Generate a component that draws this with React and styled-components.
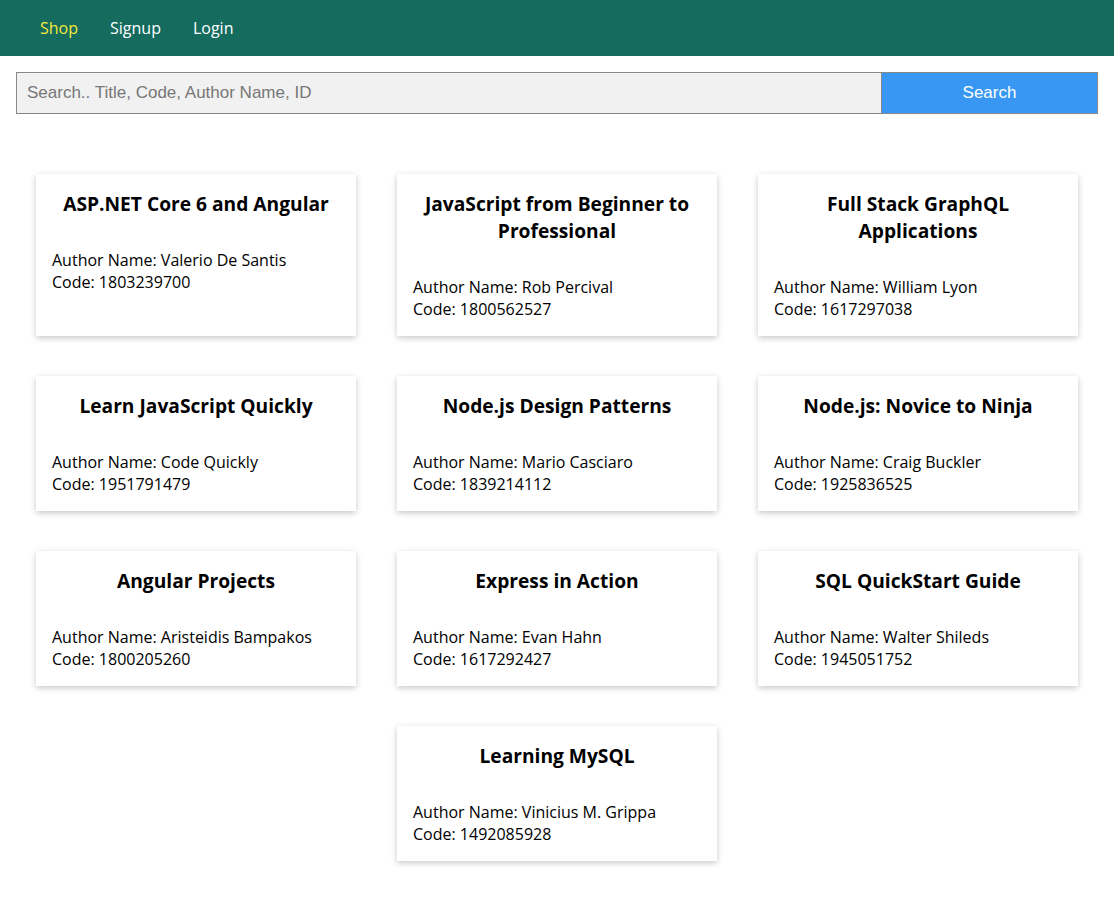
import React from 'react';
import styled, { createGlobalStyle } from 'styled-components';

const GlobalStyle = createGlobalStyle`
  * {
    box-sizing: border-box;
  }
  body {
    margin: 0;
    background: #ffffff;
    font-family: "Open Sans", "Noto Sans", sans-serif;
    color: #000;
  }
`;

const NavBar = styled.nav`
  height: 56px;
  background-color: #146b5e;
  display: flex;
  align-items: center;
  padding: 0 40px;
  gap: 32px;
`;

const NavLink = styled.a`
  font-size: 16px;
  color: ${props => (props.active ? '#f4e83a' : '#ffffff')};
  text-decoration: none;
  cursor: pointer;
`;

const SearchForm = styled.form`
  display: flex;
  margin: 16px 16px 0;
  height: 42px;
`;

const SearchInput = styled.input`
  flex: 1;
  height: 100%;
  padding: 0 10px;
  font-family: "Liberation Sans", Arial, sans-serif;
  font-size: 17px;
  background: #f1f1f1;
  border: 1px solid #888;
  outline: none;

  &::placeholder {
    color: #777;
  }
`;

const SearchButton = styled.button`
  width: 216px;
  height: 100%;
  background: #3897f2;
  color: #fff;
  font-family: "Liberation Sans", Arial, sans-serif;
  font-size: 17px;
  border: 1px solid #888;
  border-left: none;
  cursor: pointer;
`;

const CardGrid = styled.div`
  display: flex;
  flex-wrap: wrap;
  justify-content: center;
  gap: 40px 41px;
  padding: 60px 0 36px;
`;

const Card = styled.div`
  width: 320px;
  background: #fff;
  padding: 16px;
  box-shadow: 0 2px 6px rgba(0, 0, 0, 0.22);
`;

const Title = styled.h2`
  margin: 0 0 32px;
  font-size: 19.2px;
  font-weight: 700;
  text-align: center;
  line-height: 27px;
`;

const Info = styled.p`
  margin: 0;
  font-size: 16px;
  line-height: 22px;
`;

const books = [
  { title: 'ASP.NET Core 6 and Angular', author: 'Valerio De Santis', code: '1803239700' },
  { title: 'JavaScript from Beginner to Professional', author: 'Rob Percival', code: '1800562527' },
  { title: 'Full Stack GraphQL Applications', author: 'William Lyon', code: '1617297038' },
  { title: 'Learn JavaScript Quickly', author: 'Code Quickly', code: '1951791479' },
  { title: 'Node.js Design Patterns', author: 'Mario Casciaro', code: '1839214112' },
  { title: 'Node.js: Novice to Ninja', author: 'Craig Buckler', code: '1925836525' },
  { title: 'Angular Projects', author: 'Aristeidis Bampakos', code: '1800205260' },
  { title: 'Express in Action', author: 'Evan Hahn', code: '1617292427' },
  { title: 'SQL QuickStart Guide', author: 'Walter Shileds', code: '1945051752' },
  { title: 'Learning MySQL', author: 'Vinicius M. Grippa', code: '1492085928' },
];

const App = () => {
  const onSubmit = evt => {
    evt.preventDefault();
  };

  return (
    <>
      <GlobalStyle />
      <NavBar>
        <NavLink active>Shop</NavLink>
        <NavLink>Signup</NavLink>
        <NavLink>Login</NavLink>
      </NavBar>
      <SearchForm onSubmit={onSubmit}>
        <SearchInput type="text" placeholder="Search.. Title, Code, Author Name, ID" />
        <SearchButton type="submit">Search</SearchButton>
      </SearchForm>
      <CardGrid>
        {books.map(book => (
          <Card key={book.code}>
            <Title>{book.title}</Title>
            <Info>Author Name: {book.author}</Info>
            <Info>Code: {book.code}</Info>
          </Card>
        ))}
      </CardGrid>
    </>
  );
};

export default App;
